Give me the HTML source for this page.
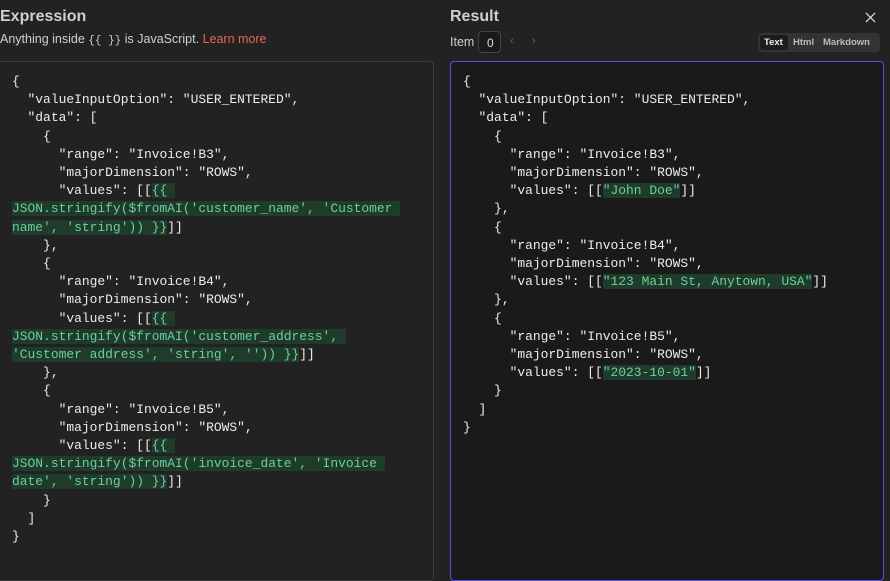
<!DOCTYPE html>
<html><head><style>
*{margin:0;padding:0;box-sizing:border-box}
body{width:890px;height:555px;background:#222222;font-family:"Liberation Sans",sans-serif;color:#d6d6d6;position:relative;overflow:hidden}
.h{position:absolute;font-size:16px;font-weight:bold;color:#cfcfcf}
.sub{position:absolute;font-size:12.5px;color:#cfcfcf}
.box{position:absolute;top:61px;border-radius:4px}
pre{font-family:"Liberation Mono",monospace;font-size:12.95px;line-height:18.2px;color:#ececec;white-space:pre}
.g{background:#1f3b2c;color:#6fcf97}
.code{font-family:"Liberation Mono",monospace;font-size:11px}
</style></head><body>
<div class="h" style="left:0;top:8px">Expression</div>
<div class="sub" style="left:0;top:32px">Anything inside <span class="code">{{ }}</span> is JavaScript. <span style="color:#e8665a">Learn more</span></div>
<div class="box" style="left:-6px;width:440px;height:520px;border:1px solid #3a3a3a;background:#222"></div>
<pre style="position:absolute;left:12px;top:73px">{
  "valueInputOption": "USER_ENTERED",
  "data": [
    {
      "range": "Invoice!B3",
      "majorDimension": "ROWS",
      "values": [[<span class="g">{{ </span>
<span class="g">JSON.stringify($fromAI('customer_name', 'Customer </span>
<span class="g">name', 'string')) }}</span>]]
    },
    {
      "range": "Invoice!B4",
      "majorDimension": "ROWS",
      "values": [[<span class="g">{{ </span>
<span class="g">JSON.stringify($fromAI('customer_address', </span>
<span class="g">'Customer address', 'string', '')) }}</span>]]
    },
    {
      "range": "Invoice!B5",
      "majorDimension": "ROWS",
      "values": [[<span class="g">{{ </span>
<span class="g">JSON.stringify($fromAI('invoice_date', 'Invoice </span>
<span class="g">date', 'string')) }}</span>]]
    }
  ]
}</pre>

<div class="h" style="left:450px;top:8px">Result</div>
<svg style="position:absolute;left:865px;top:12px" width="11" height="11" viewBox="0 0 12 12"><path d="M1 1L11 11M11 1L1 11" stroke="#e0e0e0" stroke-width="1.3"/></svg>
<div class="sub" style="left:450px;top:35px">Item</div>
<div style="position:absolute;left:478px;top:31px;width:23px;height:22px;border:1px solid #444;border-radius:4px;background:#1a1a1a;color:#ddd;font-size:12px;padding:4px 0 0 8px">0</div>
<div style="position:absolute;left:510px;top:35px;font-size:11px;color:#666">‹</div>
<div style="position:absolute;left:532px;top:35px;font-size:11px;color:#666">›</div>
<div style="position:absolute;left:758px;top:33px;width:122px;height:19px;background:#333;border-radius:4px"></div>
<div style="position:absolute;left:760px;top:35px;width:28px;height:15px;background:#1c1c1c;border-radius:3px"></div>
<div style="position:absolute;left:764px;top:37px;font-size:9.5px;font-weight:bold;color:#eee">Text</div>
<div style="position:absolute;left:793px;top:37px;font-size:9.5px;font-weight:bold;color:#bbb">Html</div>
<div style="position:absolute;left:823px;top:37px;font-size:9.5px;font-weight:bold;color:#bbb">Markdown</div>
<div class="box" style="left:450px;width:434px;height:520px;border:1px solid #5b4fd9;background:#1a1a1a"></div>
<pre style="position:absolute;left:463px;top:73px">{
  "valueInputOption": "USER_ENTERED",
  "data": [
    {
      "range": "Invoice!B3",
      "majorDimension": "ROWS",
      "values": [[<span class="g">"John Doe"</span>]]
    },
    {
      "range": "Invoice!B4",
      "majorDimension": "ROWS",
      "values": [[<span class="g">"123 Main St, Anytown, USA"</span>]]
    },
    {
      "range": "Invoice!B5",
      "majorDimension": "ROWS",
      "values": [[<span class="g">"2023-10-01"</span>]]
    }
  ]
}</pre>
</body></html>
